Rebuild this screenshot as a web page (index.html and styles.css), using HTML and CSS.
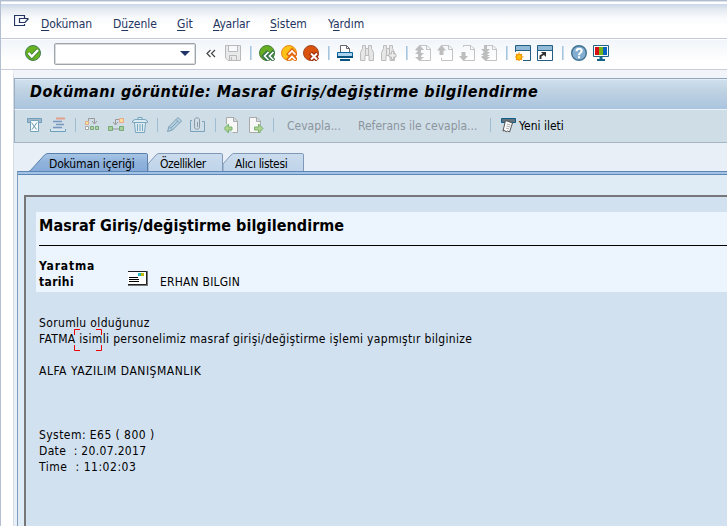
FILE: index.html
```html
<!DOCTYPE html>
<html lang="tr">
<head>
<meta charset="utf-8">
<title>Dokümanı görüntüle</title>
<link rel="stylesheet" href="styles.css">
</head>
<body>
<svg class="defs" width="0" height="0">
  <defs>
    <g id="page"><path d="M4.500 2V.500H12L15.500 4v11.500h-11V13M11.500 .500v4h4" fill="none" stroke="#c3c3c3"/></g>
    <g id="binoc"><path d="M2.500.500h3v3h3v-3h3v3l2 4v8h-4.500v-5h-4v5H.500v-8l2-4zM5.500 3.500v7M8.500 3.500v7" fill="#e6e6e6" stroke="#bcbcbc"/></g>
  </defs>
</svg>
<div class="window">
  <div class="top-edge"></div>
  <nav class="menu">
    <svg class="menu-icon" width="16" height="13" viewBox="0 0 16 13"><path d="M10.500 3V.500H.500v10h10V9M14.500 3.500H5.500v4H11L14.500 3.500" fill="none" stroke="#24355f" stroke-width="1.200"/></svg>
    <span class="m1"><u>D</u>oküman</span><span class="m2">D<u>ü</u>zenle</span><span class="m3"><u>G</u>it</span><span class="m4"><u>A</u>yarlar</span><span class="m5"><u>S</u>istem</span><span class="m6">Y<u>a</u>rdım</span>
  </nav>
  <div class="toolbar">
    <svg width="16" height="16"><circle cx="8" cy="8" r="7.500" fill="#69b31e" stroke="#3f7d55"/><path d="M3.500 8l3.300 3.500L13 5" fill="none" stroke="#477f46" stroke-width="4"/><path d="M3.500 8l3.300 3.500L13 5" fill="none" stroke="#fff" stroke-width="2.400"/></svg>
    <div class="command"><i></i></div>
    <svg class="chev" width="10" height="16"><path d="M4.500 5L1 8.500 4.500 12M9 5L5.500 8.500 9 12" fill="none" stroke="#444" stroke-width="1.200"/></svg>
    <svg width="16" height="16"><path d="M.5.500h15v15H3L.5 13zM3.500.500v6h9v-6M4.500 15v-4.500h7V15M6.500 12v3" fill="#e9e9e9" stroke="#b9b9b9"/></svg>
    <b></b>
    <svg width="16" height="16"><circle cx="8" cy="8" r="7.500" fill="#68ad22" stroke="#3f8236"/><path d="M9.500 6.500L5 11l4.500 4.500M15 6.500L10.500 11l4.500 4.500" fill="none" stroke="#35734b" stroke-width="4"/><path d="M9.500 7L5.500 11l4 4M14.500 7l-4 4 4 4" fill="none" stroke="#fff" stroke-width="1.700"/></svg>
    <svg width="16" height="16"><circle cx="8" cy="8" r="7.500" fill="#fcc215" stroke="#e8871c"/><path d="M6.500 10.500l4.500-5 4.500 5M6.500 15.500l4.500-5 4.500 5" fill="none" stroke="#e36a10" stroke-width="4"/><path d="M7.500 9.500L11 6l3.500 3.500M7.500 15l3.500-3.500L14.500 15" fill="none" stroke="#fff" stroke-width="1.700"/></svg>
    <svg width="16" height="16"><circle cx="8" cy="8" r="7.500" fill="#d9530f" stroke="#a34725"/><path d="M7.500 8l7 7M14.500 8l-7 7" stroke="#a52d0b" stroke-width="4.500"/><path d="M8 8.500l6 6M14 8.500l-6 6" stroke="#fff" stroke-width="2"/></svg>
    <b></b>
    <svg width="16" height="16"><path d="M3.500 7V.500h6l3 3V7M9.500.500v3h3" fill="#fff" stroke="#666"/><path d="M1 7.500h14.500v4H.500v-4z" fill="#a9d2ed" stroke="#07639b"/><path d="M0 12h16M3 15h10" stroke="#07537d" stroke-width="2"/></svg>
    <svg width="16" height="16"><use href="#binoc" x="1"/></svg>
    <svg width="16" height="16"><use href="#binoc"/><path d="M10.500 6.500h2v2.500H15v3h-2.500v2.500h-2V12H8V9h2.500z" fill="#eee" stroke="#bbb"/></svg>
    <b></b>
    <svg width="16" height="16"><use href="#page"/><path d="M0 5l4.500-5L9 5H6v3h3l-3 3v1h3l-4.500 4L0 12h3V9H0l3-3z" fill="#bdbdbd"/></svg>
    <svg width="16" height="16"><use href="#page"/><path d="M0 5.500L4.500 0 9 5.500H6.500V10h-4V5.500z" fill="#bdbdbd"/></svg>
    <svg width="16" height="16"><use href="#page"/><path d="M0 11h2.500V7h4v4H9l-4.500 5z" fill="#bdbdbd"/></svg>
    <svg width="16" height="16"><use href="#page"/><path d="M0 4h3V0h3v4h3L6 7h3L6 10h3l-3 2h3l-4.500 4L0 12l3-2H0l3-3z" fill="#bdbdbd"/></svg>
    <b></b>
    <svg width="16" height="16"><path d="M.5.500h15v15H.500z" fill="#fff" stroke="#245f83"/><path d="M1 1h14v4H1z" fill="#91b9d8"/><path d="M0 5.500h16" stroke="#245f83"/><path d="M0 7h8v9H0z" fill="#fff"/><circle cx="4" cy="12" r="2.800" fill="#ffc20e" stroke="#f39400"/><path d="M4 7.500v2M4 14.500V16M0 12h1.500M6.500 12h2M1 9l1.500 1.500M7 9l-1.500 1.500M1 15l1.500-1.500M7 15l-1.500-1.500" stroke="#f39400" stroke-width="1.200"/></svg>
    <svg width="16" height="16"><path d="M.5.500h15v15H.500z" fill="#fff" stroke="#245f83"/><path d="M1 1h14v4H1z" fill="#91b9d8"/><path d="M0 5.500h16" stroke="#245f83"/><path d="M3.500 14v-3l4-2.500" fill="none" stroke="#333" stroke-width="2"/><path d="M4 7h5v5z" fill="#333"/></svg>
    <b></b>
    <svg width="16" height="16"><circle cx="8" cy="8" r="7.300" fill="#83aed2" stroke="#3e7191" stroke-width="1.400"/><path d="M5.500 6.200C5.500 2.800 10.700 3 10.700 6 10.700 7.800 8 7.700 8 10.200M8 11.300v1.900" fill="none" stroke="#fff" stroke-width="2"/></svg>
    <svg width="16" height="16"><path d="M.5.500h15v11H.500z" fill="#fff" stroke="#1f6387"/><path d="M2 2h4v8H2z" fill="#d50f16"/><path d="M6 2h4v8H6z" fill="#74b51a"/><path d="M10 2h4v8h-4z" fill="#0865bf"/><path d="M6.500 12h3v2.500h-3zM4 14h8v2H4z" fill="#14658e"/></svg>
  </div>
  <div class="workspace">
    <h1>Dokümanı görüntüle: Masraf Giriş/değiştirme bilgilendirme</h1>
    <div class="actions">
      <svg width="16" height="16"><path d="M1.500 1.500h14v4h-14z" fill="#a4b8c9" stroke="#6e9fbe"/><path d="M4.500 3.500h8v11h-8z" fill="#f5fafc" stroke="#74a3bc"/><path d="M5.500 5.500l5 7M11 5.500l-5 7" stroke="#6d98ae"/></svg>
      <svg width="16" height="16"><path d="M6 1.500h9" stroke="#e3a18b" stroke-width="2"/><path d="M3 4.500h9M6 7.500h8M3 10.500h9" stroke="#7897bf" stroke-width="1.700"/><path d="M.5 12v2.500h15V12" fill="#d8e7ef" stroke="#6d9fb8"/></svg>
      <b></b>
      <svg width="16" height="16"><path d="M1.500 4.500h3v3h-3z" fill="#ffe49a" stroke="#e1ab88"/><path d="M4.500 4V1.500h6V6M8 4l2.500 3L13 4" fill="none" stroke="#999"/><path d="M1.500 9.500h3v3h-3z" fill="#fff" stroke="#a6a6a6"/><path d="M6.500 9.500h3v3h-3zM11.500 9.500h3v3h-3z" fill="#b6d5ad" stroke="#78a875"/></svg>
      <svg width="16" height="16"><path d="M11.500 1.500h4v4h-4z" fill="#ffdc9a" stroke="#e5a88a"/><path d="M11 2.500H7.500V7M5 5l2.500 3L10 5M3 12h10" fill="none" stroke="#999"/><path d="M.5 9.500h4v4h-4zM11.500 9.500h4v4h-4z" fill="#a9cda2" stroke="#77a973"/></svg>
      <svg width="16" height="16"><path d="M6 2V.500h4V2M.5 5.500V4L3 2.500h10L15.500 4v1.500zM2.500 6l1 9.500h9l1-9.500M5.500 7v7M8 7v7M10.500 7v7" fill="#dceaf1" stroke="#79a7bd"/></svg>
      <b></b>
      <svg width="16" height="16"><path d="M1.500 14.500l1.500-5L12 .500 15.500 4l-9 9zM3 9.500L6.500 13M10 2.500L13.500 6M5 11l7-7" fill="#b7d0df" stroke="#7ba0b7"/></svg>
      <svg width="16" height="16"><path d="M2 3.500H.500v11h14v-10H12" fill="none" stroke="#7aa2bd"/><path d="M7.500 10V5M4.500 4v6c0 3 5 3 5 0V3c0-3-5-3-5 0v3" fill="none" stroke="#8c9ca7"/></svg>
      <b></b>
      <svg width="16" height="16"><path d="M2.500 7V.500H10L13.500 4v11.500h-5M9.500.500v4h4" fill="#f7f7f7" stroke="#aaa"/><path d="M0 11.500L4.500 7v3H8v3H4.500v3z" fill="#add28c" stroke="#79b171"/></svg>
      <svg width="16" height="16"><path d="M1.500.500H9L12.500 4v11.500h-11zM8.500.500v4h4" fill="#f7f7f7" stroke="#aaa"/><path d="M15 11.500L10.500 7v3h-4v3h4v3z" fill="#add28c" stroke="#79b171"/></svg>
      <b></b>
      <span class="reply">Cevapla...</span><span class="reference">Referans ile cevapla...</span>
      <b class="last"></b>
      <svg class="new-icon" width="16" height="16"><path d="M1.500 1.500h14v4h-14z" fill="#64727c" stroke="#0f5d8a"/><path d="M5.500 3.500l7 2.500-3 9-2-1-1.500 1-1-1.500-2 .5z" fill="#fff" stroke="#555"/><path d="M7 7l3.500 1M6.500 9l3.500 1M6 11l3 1" stroke="#aaa"/></svg>
      <span class="new">Yeni ileti</span>
    </div>
    <div class="tabs">
      <div class="tab active"><svg width="120" height="20"><path d="M0 20v-1.500L2 18l14.500-16Q18 .500 20 .500h98.500q1 0 1 1.500v18z" fill="url(#ag)" stroke="#5a80ae"/><defs><linearGradient id="ag" x2="0" y2="1"><stop stop-color="#a9c6e4"/><stop offset=".45" stop-color="#8fb2dc"/><stop offset="1" stop-color="#86abd8"/></linearGradient></defs></svg><span>Doküman içeriği</span></div>
      <div class="tab props"><svg width="75" height="20"><path d="M0 20v-9L8 2Q9.500.500 11 .500h62.500q1 0 1 1.500v18z" fill="url(#bg)" stroke="#8199b8"/><defs><linearGradient id="bg" x2="0" y2="1"><stop stop-color="#cbdced"/><stop offset="1" stop-color="#bdd3e9"/></linearGradient></defs></svg><span>Özellikler</span></div>
      <div class="tab list"><svg width="81" height="20"><path d="M0 20v-9L8 2Q9.500.500 11 .500h68.500q1 0 1 1.500v18z" fill="url(#bg)" stroke="#8199b8"/></svg><span>Alıcı listesi</span></div>
    </div>
    <section class="panel">
      <article>
        <header>
          <h2>Masraf Giriş/değiştirme bilgilendirme</h2>
          <div class="meta">
            <strong><span class="created">Yaratma</span><br><span class="date">tarihi</span></strong>
            <svg width="20" height="15"><path d="M0 0h20v15H0z" fill="#777"/><path d="M0 1h18v12H0z" fill="#fff"/><path d="M0 .500h18.500v13H0" fill="none" stroke="#222"/><path d="M1 6.500h9M1 8.500h10M1 10.500h10" stroke="#000"/><path d="M10 2h3v3h-3z" fill="#22b8bd"/><path d="M13 2h3v3h-3z" fill="#c1bb00"/></svg>
            <span class="author">ERHAN BILGIN</span>
          </div>
        </header>
        <div class="message">
          <p class="p1">Sorumlu olduğunuz</p>
          <p class="p2">FATMA isimli personelimiz masraf girişi/değiştirme işlemi yapmıştır bilginize
            <svg class="focus" width="28" height="22"><path d="M6 .500H.500V6M22 .500h5.500V6M.5 16v5.500H6M22 21.500h5.500V16" fill="none" stroke="#f00000"/></svg></p>
          <p class="p3">ALFA YAZILIM DANIŞMANLIK</p>
          <p class="p4">System: E65 ( 800 )</p>
          <p class="p5">Date&nbsp; : 20.07.2017</p>
          <p class="p6">Time&nbsp; : 11:02:03</p>
        </div>
      </article>
    </section>
  </div>
</div>
</body>
</html>
```

FILE: styles.css
```css
* { box-sizing: border-box; }
body {
  margin: 0;
  overflow: hidden;
  font: 12px/16px "DejaVu Sans Condensed", "DejaVu Sans", sans-serif;
  font-stretch: condensed;
  color: #000;
  white-space: nowrap;
}
h1, h2, p { margin: 0; }
svg { display: block; flex: none; }
.defs { position: absolute; }
.window {
  height: 526px;
  display: flex;
  flex-direction: column;
  border-left: 1px solid #b4c0d2;
  background: #fff;
}
.top-edge { height: 4px; flex: none; border-top: 1px solid #b1bdce; background: linear-gradient(#dce4ee 0 1px, #fff 1px); }
.menu {
  height: 35px;
  flex: none;
  display: flex;
  padding: 12px 0 0 13px;
  color: #24355f;
  background: linear-gradient(#cad7e7, #e3e9f0 5px, #f7f9fb 13px, #fff 22px);
  border-bottom: 1px solid #c3c9d8;
}
.menu-icon { margin: -1px 11px 0 0; }
.menu u { text-underline-offset: 2px; }
.m1 { width: 72px; letter-spacing: -.1px; }
.m2 { width: 64px; }
.m3 { width: 36px; }
.m4 { width: 57px; letter-spacing: -.2px; }
.m5 { width: 58px; }
.toolbar {
  height: 31px;
  flex: none;
  display: flex;
  align-items: center;
  gap: 6px;
  padding: 0 0 2px 24px;
  background: linear-gradient(#fff 0 1px, #f1f5fa 1px, #fff 22px);
  border-bottom: 1px solid #c9cdda;
}
.toolbar b { width: 2px; height: 14px; margin: 0 1px 0 3px; background: linear-gradient(90deg, #a5c4dd 50%, #c7dbea 50%); }
.command {
  width: 142px;
  height: 22px;
  margin: 2px 4px 0 7px;
  border: 1px solid #9ea4a7;
  border-radius: 2px;
  background: #fff;
  box-shadow: inset 0 0 0 1px #d9dddf;
  display: flex;
  justify-content: flex-end;
  align-items: center;
}
.command i { margin: -2px 5px 0 0; border: 5px solid transparent; border-top-color: #20366b; border-bottom: 0; }
.chev { margin-right: 3px; }
.workspace {
  flex: 1;
  display: flex;
  flex-direction: column;
  margin-left: 12px;
  border-left: 1px solid #d2dbe6;
  border-top: 8px solid #f1f4f9;
  background: #e8eff7;
}
h1 {
  height: 32px;
  flex: none;
  padding: 3px 0 0 15px;
  border-top: 1px solid #91a6bd;
  border-left: 1px solid #9caec2;
  border-bottom: 1px solid #e9f2f8;
  background: linear-gradient(#e2edf6 0 1px, #cfdfed 1px, #bfd2e2 12px, #abc5df 29px);
  font-size: 16px;
  line-height: 20px;
  font-style: italic;
  letter-spacing: .49px;
}
.actions {
  height: 33px;
  flex: none;
  display: flex;
  gap: 8px;
  padding: 7px 0 0 11px;
  border-left: 1px solid #9caec2;
  border-bottom: 1px solid #a4b5c4;
  background: #cfdde7;
}
.actions b { width: 1px; height: 14px; margin: 1px 0 0 1px; background: #9fbdd2; }
.reply { margin-left: 5px; width: 63px; color: #8b959d; }
.reference { width: 124px; color: #8b959d; }
.reply, .reference, .new { padding-top: 1px; }
.actions .last { margin-left: 0; }
.new-icon { margin-left: 1px; }
.new { margin-left: -5px; }
.tabs { display: flex; height: 28px; flex: none; padding: 10px 0 0 14px; }
.tab { position: relative; height: 18px; padding-top: 3px; }
.tab svg { position: absolute; left: 0; top: 0; height: 18px; }
.tab span { position: relative; }
.active { width: 120px; padding-left: 21px; letter-spacing: -.15px; }
.props { width: 75px; padding-left: 12px; letter-spacing: -.45px; }
.list { width: 81px; padding-left: 12px; letter-spacing: -.35px; }
.panel {
  flex: 1;
  display: flex;
  margin-left: 3px;
  padding: 21px 0 0 6px;
  border-left: 1px solid #7f9dbd;
  border-top: 1px solid #5e86b5;
  background: linear-gradient(#a2c3e5 0 2px, #5e86b5 2px 3px, #dfebf5 3px);
}
article {
  flex: 1;
  margin-top: 2px;
  padding: 15px 0 0 10px;
  border-top: 2px solid #77777a;
  border-left: 2px solid #77777a;
  background: #d2e1f0;
}
header { height: 80px; padding: 4px 0 0 3px; background: #ecf4fd; }
h2 { height: 30px; border-bottom: 1px solid #000; font-size: 16px; line-height: 20px; letter-spacing: .05px; }
.meta { display: flex; padding-top: 12px; }
.meta strong { width: 89px; }
.created { letter-spacing: .85px; }
.date { letter-spacing: .35px; }
.meta svg { margin-top: 13px; }
.author { margin: 16px 0 0 12px; letter-spacing: .2px; }
.message { padding: 23px 0 0 3px; }
.p1 { letter-spacing: .35px; }
.p2 { position: relative; height: 32px; letter-spacing: .33px; }
.focus { position: absolute; left: 35px; top: -2px; }
.p3 { height: 64px; letter-spacing: .53px; }
.p4 { letter-spacing: .44px; }
.p5 { letter-spacing: .33px; }
.p6 { letter-spacing: .54px; }
```
